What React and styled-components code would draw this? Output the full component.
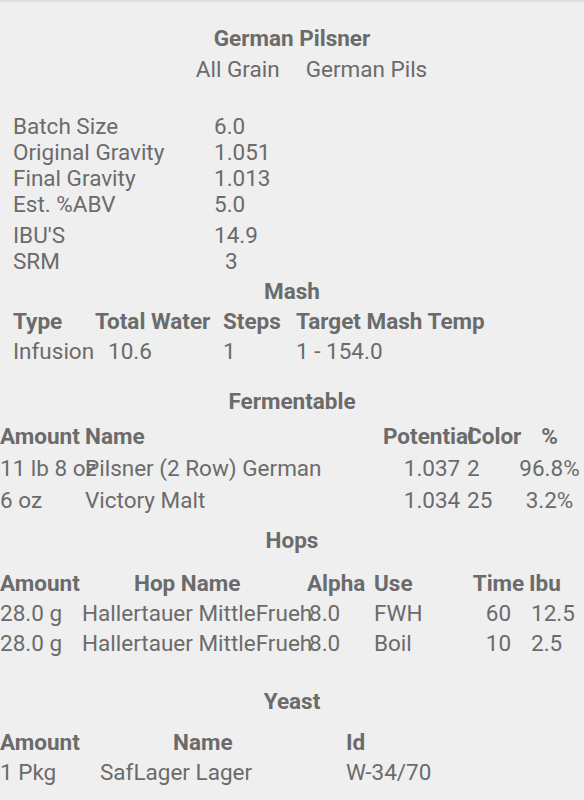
import React from 'react'
import styled, { createGlobalStyle } from 'styled-components'

const GlobalStyle = createGlobalStyle`
  html, body {
    margin: 0;
    padding: 0;
    background: #efefef;
  }
  body {
    font-family: Roboto, "Noto Sans", "Liberation Sans", sans-serif;
    color: #6b6b6b;
  }
`

const Page = styled.div`
  width: 584px;
  min-height: 800px;
  box-sizing: border-box;
  border-top: 2px solid #e0e0e0;
  background: #efefef;
  font-size: 22.5px;
`

const Title = styled.div`
  margin-top: 21px;
  text-align: center;
  font-weight: 700;
  line-height: 30px;
`

const Subtitle = styled.div`
  display: flex;
  justify-content: center;
  gap: 26px;
  padding-left: 39px;
  margin-top: 1px;
  line-height: 30px;
`

const Summary = styled.div`
  display: grid;
  grid-template-columns: 201px auto;
  padding-left: 13px;
  margin-top: 29px;
  line-height: 26px;
`

const SummaryCell = styled.div`
  padding-left: ${p => p.$indent || 0}px;
  margin-top: ${p => p.$gap || 0}px;
`

const SectionTitle = styled.div`
  margin-top: ${p => p.$mt || 0}px;
  text-align: center;
  font-weight: 700;
  line-height: 30px;
`

const Table = styled.div`
  display: grid;
  grid-template-columns: ${p => p.$cols};
  grid-auto-rows: ${p => p.$row || 30}px;
  margin-top: ${p => p.$mt || 0}px;
  padding-left: ${p => p.$pl || 0}px;
  line-height: ${p => p.$row || 30}px;
`

const Cell = styled.div`
  min-width: 0;
  white-space: nowrap;
  font-weight: ${p => (p.$bold ? 700 : 400)};
  text-align: ${p => p.$align || 'left'};
  padding-left: ${p => p.$indent || 0}px;
`

const summary = [
  ['Batch Size', '6.0'],
  ['Original Gravity', '1.051'],
  ['Final Gravity', '1.013'],
  ['Est. %ABV', '5.0'],
  ['IBU\'S', '14.9', 5],
  ['SRM', '3', 0, 11],
]

// each column: align / indent for values, headAlign / headIndent for the header
const renderTable = (cols, header, rows) => (
  <>
    {header.map((h, i) => (
      <Cell key={'h' + i} $bold $align={cols[i].headAlign} $indent={cols[i].headIndent}>
        {h}
      </Cell>
    ))}
    {rows.map((r, ri) =>
      r.map((v, i) => (
        <Cell key={ri + '-' + i} $align={cols[i].align} $indent={cols[i].indent}>
          {v}
        </Cell>
      ))
    )}
  </>
)

const mashCols = [{}, { indent: 13 }, {}, {}]
const fermCols = [{}, {}, { align: 'center', indent: 14 }, {}, { align: 'center', headAlign: 'center' }]
const hopCols = [
  {},
  { headIndent: 52 },
  { indent: 2 },
  {},
  { align: 'center', headAlign: 'center' },
  { indent: 2 },
]
const yeastCols = [{}, { headIndent: 73 }, {}]

const App = () => {
  return (
    <Page>
      <GlobalStyle />
      <Title>German Pilsner</Title>
      <Subtitle>
        <span>All Grain</span>
        <span>German Pils</span>
      </Subtitle>

      <Summary>
        {summary.map(([label, value, gap, indent]) => (
          <React.Fragment key={label}>
            <SummaryCell $gap={gap}>{label}</SummaryCell>
            <SummaryCell $gap={gap} $indent={indent}>{value}</SummaryCell>
          </React.Fragment>
        ))}
      </Summary>

      <SectionTitle $mt={2}>Mash</SectionTitle>
      <Table $cols="82px 128px 73px auto" $pl={13}>
        {renderTable(
          mashCols,
          ['Type', 'Total Water', 'Steps', 'Target Mash Temp'],
          [['Infusion', '10.6', '1', '1 - 154.0']]
        )}
      </Table>

      <SectionTitle $mt={20}>Fermentable</SectionTitle>
      <Table $cols="85px 298px 84px 48px 69px" $row={32} $mt={4}>
        {renderTable(
          fermCols,
          ['Amount', 'Name', 'Potential', 'Color', '%'],
          [
            ['11 lb 8 oz', 'Pilsner (2 Row) German', '1.037', '2', '96.8%'],
            ['6 oz', 'Victory Malt', '1.034', '25', '3.2%'],
          ]
        )}
      </Table>

      <SectionTitle $mt={9}>Hops</SectionTitle>
      <Table $cols="82px 225px 67px 94px 61px auto" $mt={13}>
        {renderTable(
          hopCols,
          ['Amount', 'Hop Name', 'Alpha', 'Use', 'Time', 'Ibu'],
          [
            ['28.0 g', 'Hallertauer MittleFrueh', '8.0', 'FWH', '60', '12.5'],
            ['28.0 g', 'Hallertauer MittleFrueh', '8.0', 'Boil', '10', '2.5'],
          ]
        )}
      </Table>

      <SectionTitle $mt={28}>Yeast</SectionTitle>
      <Table $cols="100px 246px auto" $mt={11}>
        {renderTable(
          yeastCols,
          ['Amount', 'Name', 'Id'],
          [['1 Pkg', 'SafLager Lager', 'W-34/70']]
        )}
      </Table>
    </Page>
  )
}

export default App
